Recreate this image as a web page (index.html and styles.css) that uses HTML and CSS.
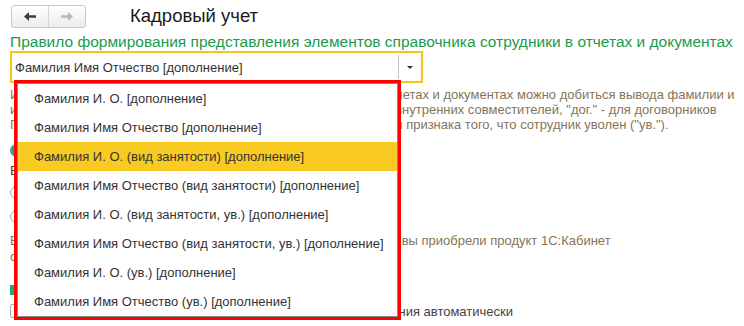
FILE: index.html
```html
<!DOCTYPE html>
<html lang="ru">
<head>
	<meta charset="UTF-8">
	<title>Кадровый учет</title>
<link rel="stylesheet" href="styles.css">
</head>
<body>
	<div class="page">
		<div class="head">
			<div class="nav">
				<span class="nav-btn back">
					<svg width="12" height="9" viewBox="0 0 12 9"><path d="M0 4.5 L5 0 L5 3.3 L12 3.3 L12 5.7 L5 5.7 L5 9 Z" fill="#3d3d3d"/></svg>
				</span>
				<span class="nav-btn fwd">
					<svg width="12" height="9" viewBox="0 0 12 9"><path d="M12 4.5 L7 0 L7 3.3 L0 3.3 L0 5.7 L7 5.7 L7 9 Z" fill="#b8b8b8"/></svg>
				</span>
			</div>
			<h1 class="title">Кадровый учет</h1>
		</div>

		<div class="label">Правило формирования представления элементов справочника сотрудники в отчетах и документах</div>

		<div class="combo">
			<span class="combo-text">Фамилия Имя Отчество [дополнение]</span>
			<span class="combo-btn"></span>
		</div>

		<p class="hint">Используя дополнительное представление для сотрудника в отчетах и документах можно добиться вывода фамилии и<br>инициалов с пометками вида: "осн." - для основных, "вн." - для внутренних совместителей, "дог." - для договорников<br>ГПХ и проч., а также вида занятости сотрудника в организации и признака того, что сотрудник уволен ("ув.").</p>

		<div class="row radio on">Использовать представление по умолчанию</div>
		<div class="row text">Вариант представления выбирается для всех отчетов</div>
		<div class="row radio">Использовать свое представление</div>
		<div class="row radio">Не использовать дополнение</div>

		<p class="note">Вариант с сервисами может быть полезен в организациях, если вы приобрели продукт 1С:Кабинет<br>сотрудника</p>

		<div class="row group">Обновление представлений</div>
		<div class="row check">Обновлять представления при любом изменении наименования автоматически</div>

		<ul class="dropdown">
			<li>Фамилия И. О. [дополнение]</li>
			<li>Фамилия Имя Отчество [дополнение]</li>
			<li class="active">Фамилия И. О. (вид занятости) [дополнение]</li>
			<li>Фамилия Имя Отчество (вид занятости) [дополнение]</li>
			<li>Фамилия И. О. (вид занятости, ув.) [дополнение]</li>
			<li>Фамилия Имя Отчество (вид занятости, ув.) [дополнение]</li>
			<li>Фамилия И. О. (ув.) [дополнение]</li>
			<li>Фамилия Имя Отчество (ув.) [дополнение]</li>
		</ul>
	</div>
</body>
</html>
```

FILE: styles.css
```css
*{margin: 0;padding: 0;list-style: none}
body{
	background: #fff;
	font-family: "Liberation Sans", Arial, sans-serif;
	color: #333;
}
.page{
	position: relative;
	height: 326px;
	padding: 0 10px;
	overflow: hidden;
}
.head{
	display: flex;
	align-items: center;
	height: 32px;
}
.nav{
	display: flex;
	height: 21px;
	margin-left: 1px;
	border: 1px solid #c9c9c9;
	border-radius: 3px;
	background: linear-gradient(#fff, #ececec);
}
.nav-btn{
	width: 36px;
	display: flex;
	align-items: center;
	justify-content: center;
}
.nav-btn + .nav-btn{
	border-left: 1px solid #d6d6d6;
}
.title{
	margin-left: 44px;
	font-size: 18.5px;
	font-weight: normal;
	color: #1a1a1a;
}
.label{
	margin-top: 1px;
	font-size: 15.5px;
	line-height: 17px;
	color: #1c9a4b;
	white-space: nowrap;
}
.combo{
	box-sizing: border-box;
	display: flex;
	align-items: center;
	width: 413px;
	height: 32px;
	margin-top: 1px;
	border: 2px solid #f5c518;
}
.combo-text{
	flex: 1;
	padding-left: 3px;
	font-size: 13px;
	color: #333;
}
.combo-btn{
	position: relative;
	width: 22px;
	align-self: stretch;
	margin: 2px 0;
	border-left: 1px solid #c4c4c4;
}
.combo-btn::after{
	content: "";
	position: absolute;
	left: 8px;
	top: 11px;
	border: 3px solid transparent;
	border-top: 3px solid #333;
	border-bottom: 0;
}
.hint{
	margin-top: 4px;
	font-size: 13px;
	line-height: 15px;
	color: #857558;
	white-space: nowrap;
}
.row{
	display: flex;
	align-items: center;
	height: 20px;
	font-size: 13px;
	color: #444;
	white-space: nowrap;
}
.radio::before{
	content: "";
	box-sizing: border-box;
	width: 13px;
	height: 13px;
	margin-right: 6px;
	border: 1px solid #a8a8a8;
	border-radius: 50%;
	background: #fff;
}
.radio.on::before{
	border: 4px solid #2aa59c;
}
.radio.on{ margin-top: 8px; }
.text + .radio{ margin-top: 2px; }
.radio + .radio{ margin-top: 4px; }
.note{
	margin-top: 7px;
	font-size: 13px;
	line-height: 16px;
	color: #857558;
	white-space: nowrap;
}
.group{
	margin-top: 15px;
	color: #333;
}
.group::before{
	content: "";
	width: 10px;
	height: 10px;
	margin-right: 6px;
	background: #25a86c;
}
.check{
	margin-top: 1px;
}
.check::before{
	content: "";
	box-sizing: border-box;
	width: 13px;
	height: 14px;
	margin-right: 6px;
	border: 1px solid #a8a8a8;
	border-radius: 2px;
	background: #fff;
}
.dropdown{
	position: absolute;
	left: 17px;
	top: 83px;
	box-sizing: border-box;
	width: 381px;
	height: 234px;
	border: 1px solid #8a8a8a;
	outline: 3px solid #f00;
	background: #fff;
}
.dropdown li{
	height: 29px;
	line-height: 29px;
	padding-left: 16px;
	font-size: 13px;
	color: #333;
	white-space: nowrap;
}
.dropdown li.active{
	background: #f8ca22;
}
```
